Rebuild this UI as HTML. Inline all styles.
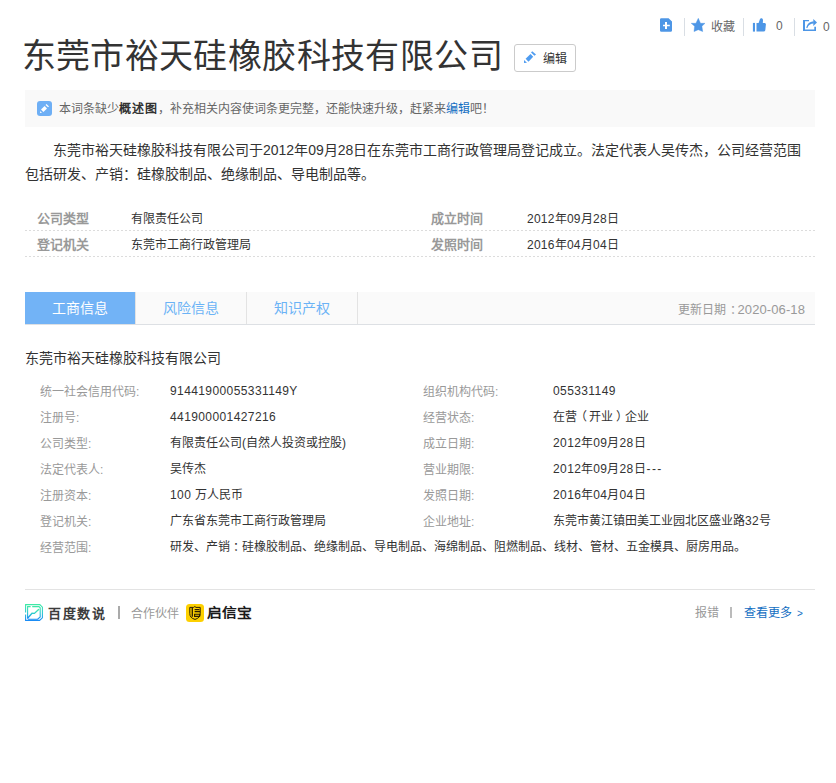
<!DOCTYPE html>
<html lang="zh-CN"><head><meta charset="utf-8">
<style>
*{margin:0;padding:0;box-sizing:border-box}
html,body{width:836px;height:783px;background:#fff;overflow:hidden}
body{font-family:"Liberation Sans",sans-serif;color:#333;position:relative}
.a{position:absolute;white-space:nowrap}
.vd{position:absolute;top:18px;width:1px;height:18px;background:#d9dee4}
.dot{position:absolute;left:25px;width:790px;height:1px;background:repeating-linear-gradient(to right,#dcdcdc 0 2px,transparent 2px 4px)}
.lb{position:absolute;font-size:13px;font-weight:bold;color:#999;line-height:20px;white-space:nowrap}
.vl{position:absolute;font-size:12px;color:#333;line-height:20px;white-space:nowrap}
.tl{position:absolute;font-size:12px;color:#999;line-height:20px;white-space:nowrap}
.tv{position:absolute;font-size:12px;color:#333;line-height:20px;white-space:nowrap}
.d{letter-spacing:0.4px}
.tab{position:absolute;top:292px;height:32px;width:110px;text-align:center;font-size:14px;line-height:32px;color:#6bb3f6}
</style></head><body>

<!-- top right toolbar -->
<svg class="a" style="left:660px;top:18px" width="12" height="14" viewBox="0 0 12 14">
  <path d="M1.5 0.2H8.6L12 3.4V12.4A1.4 1.4 0 0 1 10.6 13.8H1.4A1.4 1.4 0 0 1 0 12.4V1.6A1.4 1.4 0 0 1 1.5 0.2Z" fill="#4d96e6"/>
  <path d="M5 3.9H7V6.8H9.8V8.2H7V10.9H5V8.2H3V6.8H5Z" fill="#fff"/>
</svg>
<div class="vd" style="left:684px"></div>
<svg class="a" style="left:691px;top:18px" width="15" height="14" viewBox="0 0 15 14">
  <path d="M7.3 0.3L9.5 5.3H14L10.9 8.3L11.7 13.6L7.3 11.7L3 13.6L3.6 8.3L0.2 5.3H4.9Z" fill="#4d96e6" stroke="#4d96e6" stroke-width="0.4" stroke-linejoin="round"/>
</svg>
<div class="a" style="left:711px;top:18.5px;font-size:12px;line-height:16px;color:#666">收藏</div>
<div class="vd" style="left:743px"></div>
<svg class="a" style="left:752px;top:18px" width="15" height="14" viewBox="0 0 15 14">
  <path d="M0.9 4.9H3V13.6H0.9Z" fill="#4d96e6"/>
  <path d="M4.5 4.9H6.6L8 1Q8.6 -0.2 9.9 0.3Q11.1 0.9 11 2.4L10.8 4.9H12.8Q14.1 5.1 13.9 6.6L13.3 12.2Q13 13.6 11.6 13.6H4.5Z" fill="#4d96e6"/>
</svg>
<div class="a" style="left:776px;top:18px;font-size:12px;line-height:16px;color:#666">0</div>
<div class="vd" style="left:794px"></div>
<svg class="a" style="left:803px;top:19px" width="14" height="13" viewBox="0 0 14 13">
  <path d="M0 1H6V2.3H2V10.6H11.3V7.7H13V12H0Z" fill="#4d96e6"/>
  <path d="M10.3 0L14 3.4L10.3 7Z" fill="#4d96e6"/>
  <path d="M3.3 9C3.8 5 6.5 2.4 10.8 2.4V4.5C7.5 4.5 5.2 6.2 4.4 9Z" fill="#4d96e6"/>
</svg>
<div class="a" style="left:823px;top:18.5px;font-size:12px;line-height:16px;color:#666">0</div>

<!-- title -->
<div class="a" style="left:21.5px;top:31px;font-size:34px;line-height:50px;color:#333;letter-spacing:0.4px;font-weight:350">东莞市裕天硅橡胶科技有限公司</div>
<div class="a" style="left:514px;top:44px;width:62px;height:28px;border:1px solid #cbcbcb;border-radius:3px"></div>
<svg class="a" style="left:523px;top:51px" width="14" height="13" viewBox="0 0 14 13">
  <path d="M9.2 0.3L13 3.4L11.5 4.8L8 1.6Z" fill="#4f9cf0"/>
  <path d="M7.5 3L10.2 5.8L5.5 10.7L2.6 7.8Z" fill="#4f9cf0"/>
  <path d="M1 9L4 11.8L1 12.1Z" fill="#4f9cf0"/>
</svg>
<div class="a" style="left:543px;top:50.5px;font-size:12px;line-height:16px;color:#333">编辑</div>

<!-- tip -->
<div class="a" style="left:25px;top:90px;width:790px;height:37px;background:#f9f9f9"></div>
<div class="a" style="left:37px;top:101px;width:15px;height:15px;background:#6eaff5;border-radius:3px"></div>
<svg class="a" style="left:40px;top:104px" width="10" height="10" viewBox="0 0 10 10">
  <path d="M6.5 0L9 2.4L8 3.3L5.5 0.9Z" fill="#fff"/>
  <path d="M4.6 2L7 4.4L3.4 8L1 5.6Z" fill="#fff"/>
  <path d="M0.1 7.1L2 8.9L0.1 9.1Z" fill="#fff"/>
</svg>
<div class="a" style="left:59px;top:99px;font-size:12px;line-height:20px;color:#666">本词条缺少<b style="color:#333;letter-spacing:1px">概述图</b>，补充相关内容使词条更完整，还能快速升级，赶紧来<span style="color:#136ec2">编辑</span>吧！</div>

<!-- summary -->
<div class="a" style="left:25px;top:138px;font-size:14px;line-height:24px;color:#333;white-space:normal;width:800px;text-indent:28px">东莞市裕天硅橡胶科技有限公司于2012年09月28日在东莞市工商行政管理局登记成立。法定代表人吴传杰，公司经营范围<br>包括研发、产销：硅橡胶制品、绝缘制品、导电制品等。</div>

<!-- basic info -->
<div class="lb" style="left:37px;top:209px">公司类型</div>
<div class="vl" style="left:131px;top:209px">有限责任公司</div>
<div class="lb" style="left:431px;top:209px">成立时间</div>
<div class="vl" style="left:527px;top:209px;letter-spacing:0.25px">2012年09月28日</div>
<div class="dot" style="top:230px"></div>
<div class="lb" style="left:37px;top:235px">登记机关</div>
<div class="vl" style="left:131px;top:235px">东莞市工商行政管理局</div>
<div class="lb" style="left:431px;top:235px">发照时间</div>
<div class="vl" style="left:527px;top:235px;letter-spacing:0.25px">2016年04月04日</div>
<div class="dot" style="top:256px"></div>

<!-- tabs -->
<div class="a" style="left:25px;top:292px;width:790px;height:33px;background:#fafafa;border-bottom:1px solid #dde0e4"></div>
<div class="tab" style="left:25px;background:#72b3f6;color:#fff">工商信息</div>
<div class="tab" style="left:136px">风险信息</div>
<div class="tab" style="left:247px">知识产权</div>
<div class="a" style="left:135px;top:292px;width:1px;height:32px;background:#e3e3e3"></div>
<div class="a" style="left:246px;top:292px;width:1px;height:32px;background:#e3e3e3"></div>
<div class="a" style="left:357px;top:292px;width:1px;height:32px;background:#e3e3e3"></div>
<div class="a" style="right:31px;top:299.5px;font-size:12px;line-height:20px;color:#999">更新日期<span style="position:relative;left:4px">：</span><span style="font-size:13px;letter-spacing:0.1px">2020-06-18</span></div>

<!-- business info -->
<div class="a" style="left:25px;top:348px;font-size:14px;line-height:20px;color:#333">东莞市裕天硅橡胶科技有限公司</div>

<div class="tl" style="left:40px;top:381.5px">统一社会信用代码:</div>
<div class="tv" style="left:170px;top:381px"><span class="d">91441900055331149Y</span></div>
<div class="tl" style="left:423px;top:381.5px">组织机构代码:</div>
<div class="tv" style="left:553px;top:381px"><span class="d">055331149</span></div>

<div class="tl" style="left:40px;top:407.5px">注册号:</div>
<div class="tv" style="left:170px;top:407px"><span class="d">441900001427216</span></div>
<div class="tl" style="left:423px;top:407.5px">经营状态:</div>
<div class="tv" style="left:553px;top:407px">在营<span style="position:relative;left:-2.5px">（</span>开业<span style="position:relative;left:2.5px">）</span>企业</div>

<div class="tl" style="left:40px;top:433.5px">公司类型:</div>
<div class="tv" style="left:170px;top:433px">有限责任公司(自然人投资或控股)</div>
<div class="tl" style="left:423px;top:433.5px">成立日期:</div>
<div class="tv" style="left:553px;top:433px"><span class="d">2012</span>年<span class="d">09</span>月<span class="d">28</span>日</div>

<div class="tl" style="left:40px;top:459.5px">法定代表人:</div>
<div class="tv" style="left:170px;top:459px">吴传杰</div>
<div class="tl" style="left:423px;top:459.5px">营业期限:</div>
<div class="tv" style="left:553px;top:459px"><span class="d">2012</span>年<span class="d">09</span>月<span class="d">28</span>日<span class="d" style="letter-spacing:1.3px;margin-left:1px">---</span></div>

<div class="tl" style="left:40px;top:485.5px">注册资本:</div>
<div class="tv" style="left:170px;top:485px"><span class="d">100</span> 万人民币</div>
<div class="tl" style="left:423px;top:485.5px">发照日期:</div>
<div class="tv" style="left:553px;top:485px"><span class="d">2016</span>年<span class="d">04</span>月<span class="d">04</span>日</div>

<div class="tl" style="left:40px;top:511.5px">登记机关:</div>
<div class="tv" style="left:170px;top:511px">广东省东莞市工商行政管理局</div>
<div class="tl" style="left:423px;top:511.5px">企业地址:</div>
<div class="tv" style="left:553px;top:511px">东莞市黄江镇田美工业园北区盛业路<span class="d">32</span>号</div>

<div class="tl" style="left:40px;top:537.5px">经营范围:</div>
<div class="tv" style="left:170px;top:537px">研发、产销<span style="position:relative;left:3px">：</span>硅橡胶制品、绝缘制品、导电制品、海绵制品、阻燃制品、线材、管材、五金模具、厨房用品。</div>

<!-- footer -->
<div class="a" style="left:25px;top:589px;width:790px;height:1px;background:#e3e3e3"></div>
<svg class="a" style="left:25px;top:604px" width="18" height="17" viewBox="0 0 18 17">
  <defs><linearGradient id="g1" x1="0" y1="0" x2="0" y2="1"><stop offset="0" stop-color="#3ee9a6"/><stop offset="0.5" stop-color="#2cc9d0"/><stop offset="1" stop-color="#1a8cf5"/></linearGradient></defs>
  <g fill="none" stroke="url(#g1)" stroke-width="1.1">
  <path d="M0.6 8.6V0.6H14.8L17.4 3.2V13.8L14.6 16.4H0.6V10.6"/>
  <path d="M5.6 2.6H2.6V14.6"/>
  <path d="M7.2 2.6H14L15.2 3.8V13L12.6 15.2H3"/>
  <path d="M2.8 14L7 9.2L9.4 9.4L13.6 5.6" stroke-width="1.4" stroke-linecap="round"/>
  </g>
</svg>
<div class="a" style="left:48px;top:603.5px;font-size:13px;line-height:20px;color:#3c3c3c;font-weight:bold;letter-spacing:1.6px">百度数说</div>
<div class="a" style="left:118px;top:606px;width:1.5px;height:13px;background:#aaa"></div>
<div class="a" style="left:131px;top:603.5px;font-size:12px;line-height:20px;color:#999">合作伙伴</div>
<div class="a" style="left:186px;top:604px;width:18px;height:18px;background:#fdd000;border-radius:3.5px"></div>
<svg class="a" style="left:186px;top:604px" width="18" height="18" viewBox="0 0 18 18">
  <g fill="none" stroke="#2b1d00" stroke-width="1">
  <path d="M3.8 3.4H7.6L8.8 2.5L10 3.4H14.2V9.6Q14.2 14 9 15.4Q3.8 14 3.8 9.6Z"/>
  <path d="M6.3 3.8V12.8" stroke-width="1.3"/>
  <path d="M8.6 5.6H13.4M8.6 7.6H14M8.6 10.2H13.6V12.4H8.6Z" stroke-width="1.1"/>
  </g>
</svg>
<div class="a" style="left:207px;top:603px;font-size:13px;line-height:20px;color:#1a1a1a;font-weight:bold;transform:scaleX(1.14);transform-origin:0 0">启信宝</div>

<div class="a" style="left:695px;top:602.5px;font-size:12px;line-height:20px;color:#999">报错</div>
<div class="a" style="left:730px;top:607px;width:1.5px;height:11px;background:#bbb"></div>
<div class="a" style="left:744px;top:602.5px;font-size:12px;line-height:20px;color:#136ec2">查看更多<span style="font-size:10px;margin-left:5px">&gt;</span></div>

</body></html>
